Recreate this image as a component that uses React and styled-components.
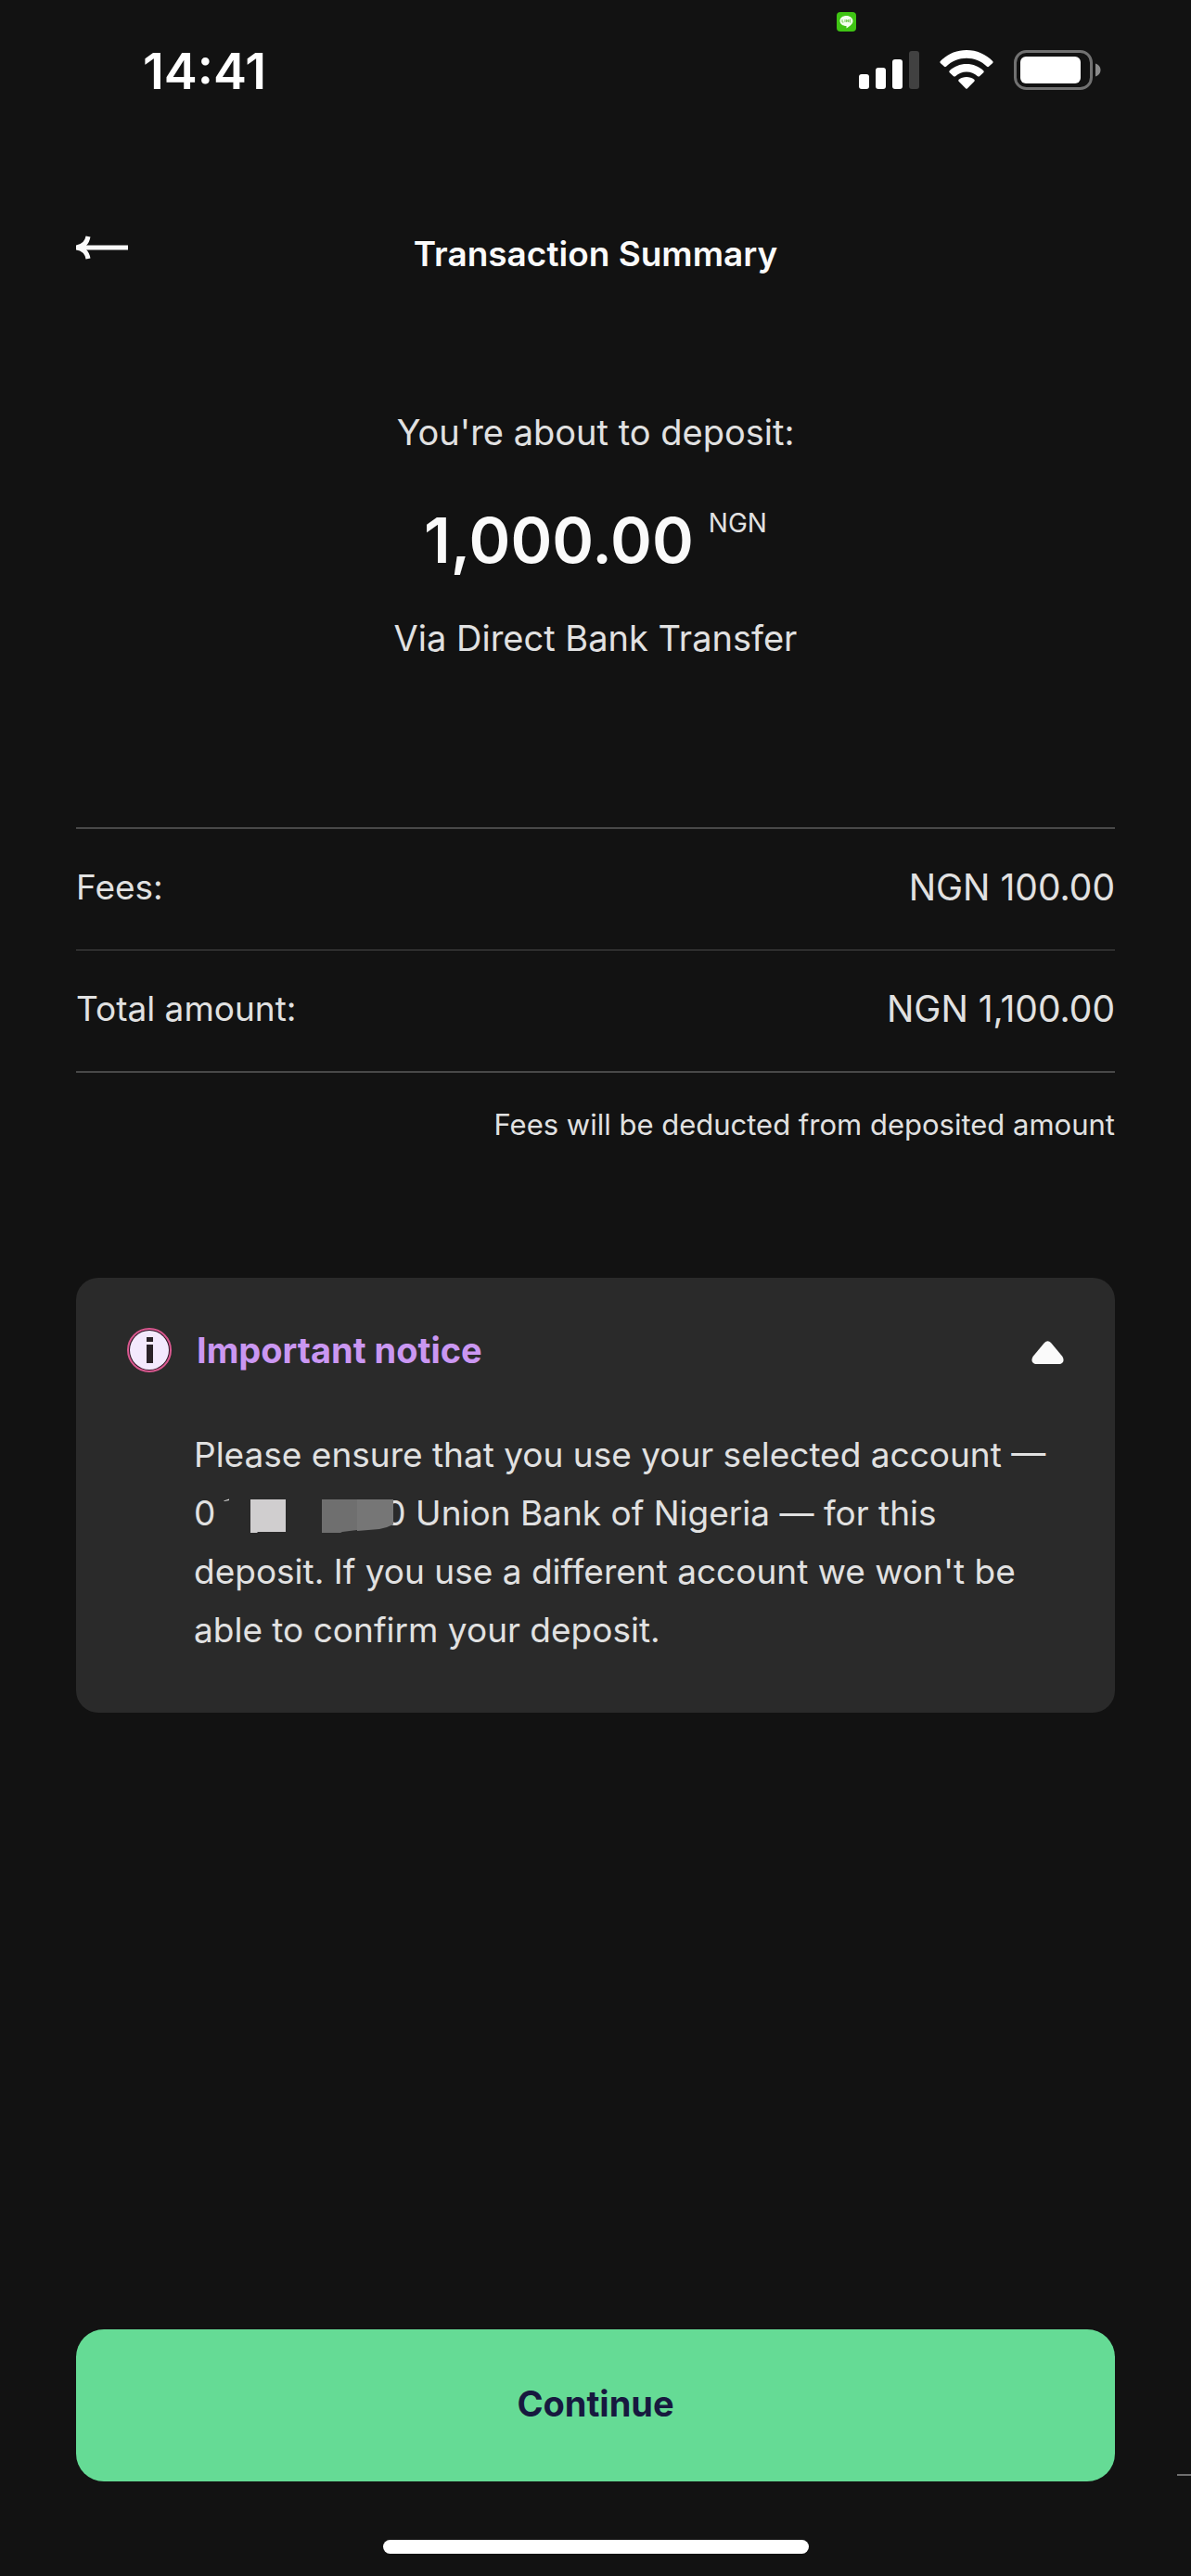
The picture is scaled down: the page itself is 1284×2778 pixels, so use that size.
import React, { useState } from "react";
import styled, { createGlobalStyle } from "styled-components";

const GlobalStyle = createGlobalStyle`
  * {
    box-sizing: border-box;
  }
  body {
    margin: 0;
    background: #121212;
    color: #e1e1e1;
    font-family: Inter, "Liberation Sans", sans-serif;
  }
`;

const Page = styled.div`
  position: relative;
  min-height: 100vh;
  display: flex;
  flex-direction: column;
  overflow: hidden;
`;

const StatusBar = styled.div`
  position: relative;
  height: 152px;
  padding: 54px 97px 0 154px;
  display: flex;
  align-items: flex-start;
  justify-content: space-between;
`;

const Time = styled.time`
  color: #ffffff;
  font-size: 54px;
  font-weight: 600;
  line-height: 46px;
`;

const StatusIcons = styled.div`
  display: flex;
  gap: 22px;
`;

const AppBadge = styled.svg`
  position: absolute;
  top: 13px;
  right: 361px;
`;

const Header = styled.header`
  display: grid;
  grid-template-columns: 120px 1fr 120px;
  align-items: center;
  align-content: start;
  height: 244px;
  padding: 0 82px;
`;

const BackButton = styled.button`
  display: flex;
  align-items: center;
  height: 229px;
  padding: 0;
  border: 0;
  background: none;
  cursor: pointer;
`;

const Title = styled.h1`
  margin: 15px 0 0;
  color: #fafafa;
  font-size: 37px;
  font-weight: 600;
  line-height: 48px;
  text-align: center;
`;

const Content = styled.main`
  display: flex;
  flex-direction: column;
  padding: 0 82px;
`;

const Deposit = styled.section`
  display: flex;
  flex-direction: column;
  align-items: center;
  padding-top: 46px;
`;

const Lead = styled.p`
  margin: 0;
  font-size: 38px;
  line-height: 48px;
`;

const Amount = styled.div`
  display: flex;
  align-items: flex-start;
  gap: 16px;
  margin: 50px 0 40px;
  color: #fafafa;
  font-size: 68px;
  font-weight: 600;
  line-height: 84px;
`;

const Currency = styled.span`
  color: #e1e1e1;
  font-size: 28px;
  font-weight: 400;
  line-height: 48px;
`;

const Summary = styled.dl`
  margin: 180px 0 0;
  border-top: 2px solid #484848;
  border-bottom: 2px solid #484848;
`;

const SummaryRow = styled.div`
  display: flex;
  align-items: center;
  justify-content: space-between;
  height: 130px;
  padding-bottom: 4px;
  font-size: 37px;
  line-height: 48px;

  & + & {
    height: 131px;
    border-top: 1px solid #484848;
  }
  dd {
    margin: 0;
    font-size: 39px;
  }
`;

const Hint = styled.p`
  margin: 32px 0 0;
  font-size: 31px;
  line-height: 48px;
  text-align: right;
`;

const Notice = styled.section`
  margin-top: 141px;
  padding: 48px 55px 58px;
  border-radius: 24px;
  background: #2a2a2a;
`;

const NoticeToggle = styled.button`
  display: flex;
  align-items: center;
  gap: 27px;
  width: 100%;
  padding: 0;
  border: 0;
  background: none;
  color: #ca97f2;
  font: inherit;
  font-size: 38px;
  font-weight: 700;
  line-height: 60px;
  text-align: left;
  cursor: pointer;

  svg:last-child {
    margin-left: auto;
    transform: ${(props) => (props.$open ? "none" : "rotate(180deg)")};
  }
`;

const NoticeText = styled.p`
  margin: 51px 0 0;
  padding: 0 12px 0 72px;
  font-size: 37px;
  line-height: 63px;
`;

// Lies over the inner edges of the two digits beside it
const DigitMask = styled.svg`
  position: relative;
  margin: 0 -10px 0 -1px;
  vertical-align: top;
`;

const Footer = styled.footer`
  position: relative;
  display: flex;
  flex-direction: column;
  align-items: center;
  margin-top: auto;
  padding: 0 82px 24px;
`;

const ContinueButton = styled.button`
  width: 100%;
  height: 164px;
  padding: 0 0 4px;
  border: 0;
  border-radius: 30px;
  background: #65db95;
  color: #17193f;
  font: inherit;
  font-size: 38px;
  font-weight: 700;
  cursor: pointer;
`;

const EdgeLine = styled.div`
  position: absolute;
  top: 156px;
  right: 0;
  width: 15px;
  height: 2px;
  background: #6e6e6e;
`;

const HomeBar = styled.div`
  width: 41%;
  max-width: 459px;
  height: 15px;
  margin-top: 63px;
  border-radius: 8px;
  background: #ffffff;
`;

const rows = [
  { label: "Fees:", value: "NGN 100.00" },
  { label: "Total amount:", value: "NGN 1,100.00" },
];

function SignalIcon() {
  return (
    <svg width="65" height="43" viewBox="0 0 65 43" fill="#fff" aria-hidden="true">
      <rect x="0" y="26" width="11" height="16" rx="3" />
      <rect x="18" y="19" width="11" height="23" rx="3" />
      <rect x="36" y="10" width="11" height="32" rx="3" />
      <rect x="54" y="1" width="11" height="41" rx="3" fill="#414141" />
    </svg>
  );
}

function WifiIcon() {
  return (
    <svg width="58" height="43" viewBox="0 0 58 43" fill="#fff" aria-hidden="true">
      <path d="M29 0C40 0 50 4.500 57.200 12Q58 13 57.200 13.900L53 17.800Q52 18.600 51 17.700C45 12 37 8.800 29 8.800S13 12 7 17.700Q6 18.600 5 17.800L.8 13.900Q0 13 .8 12C8 4.500 18 0 29 0Z" />
      <path d="M29 15C36 15 42.500 17.700 47.300 22.200Q48.300 23.200 47.300 24.200L43 28.200Q42 29 41 28.200C37.700 25.300 33.500 23.500 29 23.500S20.300 25.300 17 28.200Q16 29 15 28.200L10.700 24.200Q9.700 23.200 10.700 22.200C15.500 17.700 22 15 29 15Z" />
      <path d="M29 29C32 29 35 30 37.300 31.800Q38.300 32.700 37.400 33.700L30 41.300Q29 42.300 28 41.300L20.600 33.700Q19.700 32.700 20.700 31.800C23 30 26 29 29 29Z" />
    </svg>
  );
}

function BatteryIcon() {
  return (
    <svg width="94" height="43" viewBox="0 0 94 43" aria-hidden="true">
      <rect x="1.500" y="1.500" width="82" height="40" rx="12" fill="none" stroke="#717171" strokeWidth="3" />
      <rect x="7" y="7" width="65" height="29" rx="6" fill="#fff" />
      <path d="M88 14.500C91 15.500 93.500 18 93.500 21.500S91 27.500 88 28.500Z" fill="#8a8a8a" />
    </svg>
  );
}

function ArrowIcon() {
  return (
    <svg width="56" height="26" viewBox="0 0 56 26" fill="none" stroke="#fafafa" strokeWidth="5" aria-hidden="true">
      <path d="M3 13H56" />
      <path d="M13 1C12 7 8 12 0 13C8 14 12 19 13 25" />
    </svg>
  );
}

function InfoIcon() {
  return (
    <svg width="48" height="48" viewBox="0 0 48 48" aria-hidden="true">
      <circle cx="24" cy="24" r="23" fill="#2e1626" stroke="#d9588f" strokeWidth="2" />
      <circle cx="24" cy="24" r="21" fill="#f3e9fd" />
      <path d="M21 10H28V15H21ZM21 18H28V38H21Z" fill="#2a2228" />
    </svg>
  );
}

// Blocks that hide the middle digits of the account number
function HiddenDigits() {
  return (
    <DigitMask width="193" height="63" viewBox="0 1 193 63" aria-hidden="true">
      <path d="M10 19.500L16 17.500V19L11 20Z" fill="#d8d8d8" />
      <path d="M39 18H77V53H47L46 54H39Z" fill="#d0cecf" />
      <path d="M116 18H154V51L138 53L136 54H116Z" fill="#6f6f6f" />
      <path d="M154 18H193V45L186 48L178 50L154 52Z" fill="#767676" />
    </DigitMask>
  );
}

export default function App() {
  const [open, setOpen] = useState(true);

  return (
    <>
      <GlobalStyle />
      <Page>
        <StatusBar>
          <Time>14:41</Time>
          <AppBadge width="21" height="21" viewBox="0 0 21 21" aria-hidden="true">
            <rect width="21" height="21" rx="4" fill="#3fc414" />
            <path d="M10.500 4C14.500 4 17.500 6.500 17.500 9.800C17.500 13 14 15.500 10.500 17.500V15C6.500 15 3.500 12.800 3.500 9.500S6.500 4 10.500 4Z" fill="#f4fff0" />
            <path d="M6 8V11H7.500M9 8V11M10.500 11V8L12.500 11V8M15.500 8H14V11H15.500M14 9.500H15" fill="none" stroke="#7fcf63" />
          </AppBadge>
          <StatusIcons>
            <SignalIcon />
            <WifiIcon />
            <BatteryIcon />
          </StatusIcons>
        </StatusBar>
        <Header>
          <BackButton type="button" aria-label="Back">
            <ArrowIcon />
          </BackButton>
          <Title>Transaction Summary</Title>
        </Header>
        <Content>
          <Deposit>
            <Lead>You're about to deposit:</Lead>
            <Amount>
              1,000.00
              <Currency>NGN</Currency>
            </Amount>
            <Lead>Via Direct Bank Transfer</Lead>
          </Deposit>
          <Summary>
            {rows.map((row) => (
              <SummaryRow key={row.label}>
                <dt>{row.label}</dt>
                <dd>{row.value}</dd>
              </SummaryRow>
            ))}
          </Summary>
          <Hint>Fees will be deducted from deposited amount</Hint>
          <Notice>
            <NoticeToggle
              type="button"
              $open={open}
              aria-expanded={open}
              onClick={() => setOpen(!open)}
            >
              <InfoIcon />
              Important notice
              <svg width="35" height="30" viewBox="0 -5 35 30" fill="#fafafa" aria-hidden="true">
                <path d="M14 2Q17.500 -1.500 21 2L33.500 17Q36.500 23 31 25H4Q-1.500 23 1.500 17Z" />
              </svg>
            </NoticeToggle>
            {open && (
              <NoticeText>
                Please ensure that you use your selected account — 0
                <HiddenDigits />0 Union Bank of Nigeria — for this deposit. If
                you use a different account we won't be able to confirm your
                deposit.
              </NoticeText>
            )}
          </Notice>
        </Content>
        <Footer>
          <ContinueButton type="button">Continue</ContinueButton>
          <EdgeLine />
          <HomeBar />
        </Footer>
      </Page>
    </>
  );
}
